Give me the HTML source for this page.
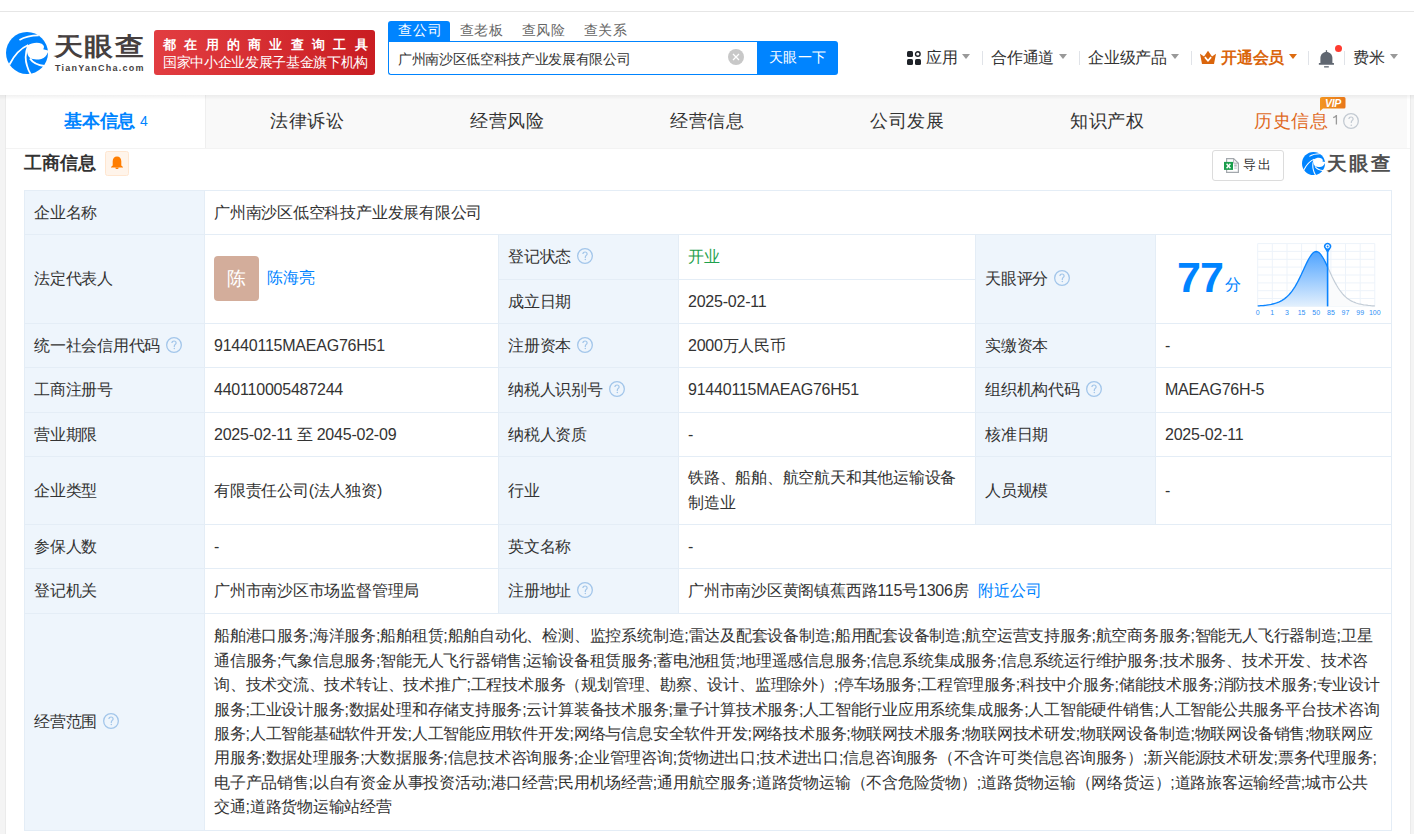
<!DOCTYPE html>
<html><head><meta charset="utf-8">
<style>
*{box-sizing:border-box;margin:0;padding:0}
html,body{width:1414px;height:834px;overflow:hidden}
body{position:relative;background:#f4f4f4;font-family:"Liberation Sans",sans-serif;color:#333;font-size:15.4px}
.a{position:absolute;white-space:nowrap}
#topbar{left:0;top:0;width:1414px;height:11px;background:#fff}
#topline{left:0;top:11px;width:1414px;height:1px;background:#e6e6e6}
#header{left:0;top:12px;width:1414px;height:83px;background:#fff}
#card{left:7px;top:95px;width:1402px;height:739px;background:#fff;box-shadow:0 0 1px rgba(0,0,0,.12)}
.tabrow{left:7px;top:95px;width:1401px;height:53px;background:#f9f9f9}
.tab{top:95px;height:53px;font-size:17.6px;color:#333;display:flex;align-items:center;justify-content:center}
.tabtxt{position:absolute;top:0;font-size:17.6px;line-height:1}
.cell{position:absolute}
.lbl{background:#eef5fc}
.hl{position:absolute;height:1px;background:#e4edf6}
.vl{position:absolute;width:1px;background:#e4edf6}
.t{position:absolute;white-space:nowrap;line-height:1;font-size:15.4px;color:#333}
.q{position:absolute;width:16px;height:16px;border:1px solid #a9cbee;border-radius:50%;color:#a9cbee;font-size:11px;line-height:14px;text-align:center}
.caret{position:absolute;width:0;height:0;border-left:4.5px solid transparent;border-right:4.5px solid transparent;border-top:5px solid #999}
.div{position:absolute;width:1px;height:14px;background:#e0e3e8}
.c{position:absolute;display:flex;align-items:center;white-space:nowrap;font-size:16px;line-height:1;color:#333;letter-spacing:-0.22px}
.qi{display:block;width:16px;height:16px;margin-left:6px;position:relative;top:-1px;flex:none}
.av{display:inline-block;width:45px;height:45px;border-radius:4px;background:#d3ad9b;color:#fff;font-size:19px;line-height:45px;text-align:center}
.para{line-height:24.4px}
</style></head><body>
<div class="a" id="topbar"></div>
<div class="a" id="topline"></div>
<div class="a" id="header"></div>

<!-- logo -->
<svg class="a" style="left:6px;top:32px" width="42" height="42" viewBox="0 0 100 100">
 <circle cx="50" cy="50" r="50" fill="#0084ff"/>
 <path d="M52,32 C60,26 75,23 85,28 C91,31 92,37 88.6,41 L100,44 L100,48 C97,55 92,62 84,64 C75,66 64,66 57.6,62 C53,58 50,52 50,45 C50,40 51,35 52,32 Z" fill="#fff"/>
 <path d="M8,78 C18,58 32,40 53,31" stroke="#fff" stroke-width="4.2" fill="none"/>
 <path d="M53,31 C46,48 45,65 50,80 C52,88 55,94 59,101" stroke="#fff" stroke-width="4.2" fill="none"/>
 <path d="M57,63 C63,72 75,79 92,81" stroke="#fff" stroke-width="4.6" fill="none"/>
 <path d="M32,19 C45,11 60,8 78,8" stroke="#fff" stroke-width="3.8" fill="none"/>
</svg>
<div class="t" style="left:54px;top:35px;font-size:27px;font-weight:bold;color:#463f3f;letter-spacing:1.2px;transform:scale(1.08,0.93);transform-origin:0 0">天眼查</div>
<div class="t" style="left:55px;top:64px;font-size:9px;font-weight:bold;color:#463f3f;letter-spacing:1.25px">TianYanCha.com</div>

<!-- red banner -->
<div class="a" style="left:154px;top:30px;width:221px;height:45px;border-radius:3px;background:linear-gradient(90deg,#e23d41,#c91d22)"></div>
<div class="t" style="left:163px;top:39px;font-size:12.5px;font-weight:bold;color:#fff;letter-spacing:8.3px">都在用的商业查询工具</div>
<div class="t" style="left:163px;top:55px;font-size:14px;font-weight:500;color:#fff;letter-spacing:-0.33px">国家中小企业发展子基金旗下机构</div>

<!-- search -->
<div class="a" style="left:388px;top:21px;width:62px;height:21px;background:#0084ff;border-radius:3px 3px 0 0"></div>
<div class="t" style="left:398px;top:23px;font-size:14px;color:#fff;letter-spacing:0.9px">查公司</div>
<div class="t" style="left:460px;top:23px;font-size:14px;letter-spacing:0.4px;color:#666">查老板</div>
<div class="t" style="left:522px;top:23px;font-size:14px;letter-spacing:0.4px;color:#666">查风险</div>
<div class="t" style="left:584px;top:23px;font-size:14px;letter-spacing:0.4px;color:#666">查关系</div>
<div class="a" style="left:388px;top:41px;width:372px;height:34px;border:1px solid #0084ff;border-right:none;border-radius:0 0 0 3px;background:#fff"></div>
<div class="t" style="left:398px;top:52px;font-size:14px;letter-spacing:-0.33px;color:#333">广州南沙区低空科技产业发展有限公司</div>
<div class="a" style="left:728px;top:49px;width:16px;height:16px;border-radius:50%;background:#c8c8c8"></div>
<svg class="a" style="left:728px;top:49px" width="16" height="16" viewBox="0 0 16 16"><path d="M5 5 L11 11 M11 5 L5 11" stroke="#fff" stroke-width="1.3"/></svg>
<div class="a" style="left:757px;top:41px;width:81px;height:34px;background:#0084ff;border-radius:0 3px 3px 0"></div>
<div class="t" style="left:769px;top:50px;font-size:14px;color:#fff;letter-spacing:0.3px">天眼一下</div>

<!-- right nav -->
<svg class="a" style="left:907px;top:51px" width="14" height="14" viewBox="0 0 14 14">
 <rect x="0" y="0" width="6" height="6" rx="1.5" fill="#1f2329"/>
 <circle cx="10.8" cy="3" r="2.3" fill="none" stroke="#1f2329" stroke-width="1.4"/>
 <rect x="0" y="8" width="6" height="6" rx="1.5" fill="#1f2329"/>
 <rect x="8" y="8" width="6" height="6" rx="1.5" fill="#1f2329"/>
</svg>
<div class="t" style="left:926px;top:50px;font-size:16px;letter-spacing:-0.25px;color:#333">应用</div>
<div class="caret" style="left:962px;top:54px"></div>
<div class="div" style="left:982px;top:51px"></div>
<div class="t" style="left:991px;top:50px;font-size:16px;letter-spacing:-0.25px;color:#333">合作通道</div>
<div class="caret" style="left:1059px;top:54px"></div>
<div class="div" style="left:1079px;top:51px"></div>
<div class="t" style="left:1088px;top:50px;font-size:16px;letter-spacing:-0.25px;color:#333">企业级产品</div>
<div class="caret" style="left:1171px;top:54px"></div>
<div class="div" style="left:1191px;top:51px"></div>
<svg class="a" style="left:1200px;top:50px" width="16" height="14" viewBox="0 0 16 13">
 <path d="M0 3.2 L4 6 L8 0.3 L12 6 L16 3.2 L14 13.5 L2 13.5 Z" fill="#da650c"/>
 <path d="M4.9 6.6 L8 10.2 L11.1 6.6" stroke="#fff" stroke-width="1.7" fill="none"/>
</svg>
<div class="t" style="left:1221px;top:50px;font-size:16px;letter-spacing:-0.25px;color:#da650c;font-weight:bold">开通会员</div>
<div class="caret" style="left:1289px;top:54px;border-top-color:#dd6b10"></div>
<div class="div" style="left:1308px;top:51px"></div>
<svg class="a" style="left:1318px;top:50px" width="17" height="18" viewBox="0 0 17 18">
 <rect x="7.8" y="0.2" width="1.3" height="2.4" fill="#5f6670"/>
 <path d="M8.4 1.9 C5 1.9 2.4 4.4 2.4 8 L2.4 13.2 L14.4 13.2 L14.4 8 C14.4 4.4 11.8 1.9 8.4 1.9 Z" fill="#5f6670"/>
 <rect x="0.8" y="13" width="15.2" height="1.7" rx="0.5" fill="#5f6670"/>
 <rect x="6.1" y="16" width="4.7" height="1.6" fill="#7d838b"/>
</svg>
<div class="a" style="left:1335px;top:45px;width:7px;height:7px;border-radius:50%;background:#ff3b30"></div>
<div class="div" style="left:1344px;top:51px"></div>
<div class="t" style="left:1353px;top:50px;font-size:16px;letter-spacing:-0.25px;color:#333">费米</div>
<div class="caret" style="left:1390px;top:54px"></div>

<!-- card -->
<div class="a" style="left:5px;top:95px;width:1px;height:739px;background:#ebebeb"></div>
<div class="a" style="left:1410px;top:95px;width:1px;height:739px;background:#ebebeb"></div>
<div class="a" style="left:6px;top:95px;width:1404px;height:739px;background:#fff"></div>
<div class="a" style="left:205px;top:95px;width:1202px;height:53px;background:#f9f9f9"></div>
<div class="a" style="left:205px;top:95px;width:1px;height:53px;background:#efefef"></div>
<div class="a" style="left:6px;top:148px;width:1404px;height:1px;background:#f3f3f3"></div>
<div class="a" style="left:0;top:95px;width:1414px;height:5px;background:linear-gradient(rgba(0,0,0,.055),rgba(0,0,0,0))"></div>
<div class="t" style="left:64px;top:112px;font-size:18px;letter-spacing:-0.2px;font-weight:bold;color:#0084ff">基本信息</div>
<div class="t" style="left:140px;top:113.5px;font-size:14px;color:#0084ff">4</div>
<div class="t" style="left:270px;top:112px;font-size:18px;letter-spacing:0.6px">法律诉讼</div>
<div class="t" style="left:470px;top:112px;font-size:18px;letter-spacing:0.6px">经营风险</div>
<div class="t" style="left:670px;top:112px;font-size:18px;letter-spacing:0.6px">经营信息</div>
<div class="t" style="left:870px;top:112px;font-size:18px;letter-spacing:0.6px">公司发展</div>
<div class="t" style="left:1070px;top:112px;font-size:18px;letter-spacing:0.6px">知识产权</div>
<div class="t" style="left:1254px;top:112px;font-size:18px;letter-spacing:0.6px;color:#e06a1f">历史信息</div>
<svg class="a" style="left:1332px;top:114px" width="7" height="12" viewBox="0 0 7 12"><path d="M4.4 1 V10.6 M4.4 1.2 C3.8 2.4 2.6 3.2 1.2 3.7" fill="none" stroke="#999" stroke-width="1.3"/></svg>
<svg class="a" style="left:1343px;top:113px" width="16" height="16" viewBox="0 0 16 16"><circle cx="8" cy="8" r="7.35" fill="none" stroke="#c3cad2" stroke-width="1.3"/><path d="M5.9 6.1 C5.9 4.7 6.9 4 8 4 C9.2 4 10.1 4.8 10.1 5.9 C10.1 7.3 8.3 7.6 8.3 9.2 L8.3 10.1" fill="none" stroke="#c3cad2" stroke-width="1.2"/><circle cx="8.3" cy="12.2" r="0.8" fill="#c3cad2"/></svg>
<svg class="a" style="left:1320px;top:97px" width="26" height="14" viewBox="0 0 26 14">
 <defs><linearGradient id="vg" x1="0" x2="1"><stop offset="0" stop-color="#f3951f"/><stop offset="1" stop-color="#e8771a"/></linearGradient></defs>
 <path d="M2 0 H24 Q25.5 0 25.5 1.5 V10 Q25.5 11.5 24 11.5 H3 L0 14 V1.5 Q0 0 2 0 Z" fill="url(#vg)"/>
 <text x="13" y="9.6" font-family="Liberation Sans" font-size="10.5" font-weight="bold" font-style="italic" letter-spacing="-0.3" fill="#fff" text-anchor="middle">VIP</text>
</svg>

<!-- section header -->
<div class="t" style="left:24px;top:154px;font-size:18px;letter-spacing:0px;font-weight:bold;color:#333">工商信息</div>
<div class="a" style="left:105px;top:151px;width:24px;height:25px;background:#fff4ea;border:1px solid #ffe6d0;border-radius:2.5px"></div>
<svg class="a" style="left:111px;top:156px" width="12" height="13" viewBox="0 0 12 13">
 <path d="M6 0.4 C8.6 0.4 10.2 2.4 10.3 5.2 L10.3 9.6 L12 10.9 L12 11.6 L0 11.6 L0 10.9 L1.7 9.6 L1.7 5.2 C1.8 2.4 3.4 0.4 6 0.4 Z" fill="#ff7d00"/>
 <path d="M4.3 11.4 C4.4 12.4 5.1 13 6 13 C6.9 13 7.6 12.4 7.7 11.4 Z" fill="#ff7d00"/>
</svg>
<div class="a" style="left:1212px;top:150px;width:72px;height:31px;border:1px solid #dcdcdc;border-radius:3px;background:#fff"></div>
<svg class="a" style="left:1224px;top:158px" width="16" height="15" viewBox="0 0 16 15">
 <path d="M2.6 0.6 H9.6 L14.4 5.2 V14.4 H2.6 Z" fill="#fff" stroke="#a3a8ad" stroke-width="1.2"/>
 <path d="M9.6 0.6 V5.2 H14.4" fill="none" stroke="#a3a8ad" stroke-width="0.9"/>
 <rect x="10.2" y="6.4" width="2.6" height="2.2" fill="#b9bdc1"/><rect x="10.2" y="9.6" width="2.6" height="1" fill="#b9bdc1"/>
 <rect x="0" y="3.9" width="9" height="8" fill="#1a9d4c"/>
 <path d="M2.6 5.7 L6.4 10.2 M6.4 5.7 L2.6 10.2" stroke="#fff" stroke-width="1.4"/>
</svg>
<div class="t" style="left:1243px;top:158px;font-size:13px;letter-spacing:2px;color:#333">导出</div>
<svg class="a" style="left:1302px;top:152px" width="23" height="23" viewBox="0 0 100 100">
 <circle cx="50" cy="50" r="50" fill="#0084ff"/>
 <path d="M52,32 C60,26 75,23 85,28 C91,31 92,37 88.6,41 L100,44 L100,48 C97,55 92,62 84,64 C75,66 64,66 57.6,62 C53,58 50,52 50,45 C50,40 51,35 52,32 Z" fill="#fff"/>
 <path d="M8,78 C18,58 32,40 53,31" stroke="#fff" stroke-width="4.6" fill="none"/>
 <path d="M53,31 C46,48 45,65 50,80 C52,88 55,94 59,101" stroke="#fff" stroke-width="4.6" fill="none"/>
 <path d="M57,63 C63,72 75,79 92,81" stroke="#fff" stroke-width="4.6" fill="none"/>
 <path d="M32,19 C45,11 60,8 78,8" stroke="#fff" stroke-width="4.6" fill="none"/>
</svg>
<div class="t" style="left:1327px;top:154px;font-size:20px;font-weight:bold;color:#505050;letter-spacing:2px;transform:scale(1.0,0.97);transform-origin:0 0">天眼查</div>

<!-- TABLE -->
<!--TBL-->
<div class="a" style="left:24px;top:190px;width:1368px;height:641px;background:#fff"></div>
<div class="a" style="left:24px;top:190px;width:180px;height:640px;background:#eef5fc"></div>
<div class="a" style="left:498px;top:234px;width:180px;height:379px;background:#eef5fc"></div>
<div class="a" style="left:975px;top:234px;width:180px;height:290px;background:#eef5fc"></div>
<div class="hl" style="left:24px;top:190px;width:1368px"></div>
<div class="hl" style="left:24px;top:234px;width:1368px"></div>
<div class="hl" style="left:24px;top:323px;width:1368px"></div>
<div class="hl" style="left:24px;top:367px;width:1368px"></div>
<div class="hl" style="left:24px;top:412px;width:1368px"></div>
<div class="hl" style="left:24px;top:456px;width:1368px"></div>
<div class="hl" style="left:24px;top:524px;width:1368px"></div>
<div class="hl" style="left:24px;top:568px;width:1368px"></div>
<div class="hl" style="left:24px;top:613px;width:1368px"></div>
<div class="hl" style="left:24px;top:830px;width:1368px"></div>
<div class="hl" style="left:498px;top:279px;width:478px"></div>
<div class="vl" style="left:24px;top:190px;height:641px"></div>
<div class="vl" style="left:1391px;top:190px;height:641px"></div>
<div class="vl" style="left:204px;top:190px;height:641px"></div>
<div class="vl" style="left:498px;top:234px;height:380px"></div>
<div class="vl" style="left:678px;top:234px;height:380px"></div>
<div class="vl" style="left:975px;top:234px;height:291px"></div>
<div class="vl" style="left:1155px;top:234px;height:291px"></div>
<div class="c" style="left:25px;top:191px;width:179px;height:43px;padding-left:9px;">企业名称</div>
<div class="c" style="left:205px;top:191px;width:1186px;height:43px;padding-left:9px;">广州南沙区低空科技产业发展有限公司</div>
<div class="c" style="left:25px;top:235px;width:179px;height:88px;padding-left:9px;">法定代表人</div>
<div class="c" style="left:205px;top:235px;width:293px;height:88px;padding-left:9px;padding-bottom:2px"><span class="av">陈</span><span style="color:#0084ff;margin-left:8px">陈海亮</span></div>
<div class="c" style="left:499px;top:235px;width:179px;height:44px;padding-left:9px;">登记状态<svg class="qi" width="16" height="16" viewBox="0 0 16 16"><circle cx="8" cy="8" r="7.35" fill="none" stroke="#a3c6ea" stroke-width="1.3"/><path d="M5.9 6.1 C5.9 4.7 6.9 4 8 4 C9.2 4 10.1 4.8 10.1 5.9 C10.1 7.3 8.3 7.6 8.3 9.2 L8.3 10.1" fill="none" stroke="#a3c6ea" stroke-width="1.2"/><circle cx="8.3" cy="11.6" r="0.75" fill="#a3c6ea"/></svg></div>
<div class="c" style="left:679px;top:235px;width:296px;height:44px;padding-left:9px;"><span style="color:#1fa14d">开业</span></div>
<div class="c" style="left:499px;top:280px;width:179px;height:43px;padding-left:9px;">成立日期</div>
<div class="c" style="left:679px;top:280px;width:296px;height:43px;padding-left:9px;">2025-02-11</div>
<div class="c" style="left:976px;top:235px;width:179px;height:88px;padding-left:9px;">天眼评分<svg class="qi" width="16" height="16" viewBox="0 0 16 16"><circle cx="8" cy="8" r="7.35" fill="none" stroke="#a3c6ea" stroke-width="1.3"/><path d="M5.9 6.1 C5.9 4.7 6.9 4 8 4 C9.2 4 10.1 4.8 10.1 5.9 C10.1 7.3 8.3 7.6 8.3 9.2 L8.3 10.1" fill="none" stroke="#a3c6ea" stroke-width="1.2"/><circle cx="8.3" cy="11.6" r="0.75" fill="#a3c6ea"/></svg></div>
<div class="c" style="left:25px;top:324px;width:179px;height:43px;padding-left:9px;">统一社会信用代码<svg class="qi" width="16" height="16" viewBox="0 0 16 16"><circle cx="8" cy="8" r="7.35" fill="none" stroke="#a3c6ea" stroke-width="1.3"/><path d="M5.9 6.1 C5.9 4.7 6.9 4 8 4 C9.2 4 10.1 4.8 10.1 5.9 C10.1 7.3 8.3 7.6 8.3 9.2 L8.3 10.1" fill="none" stroke="#a3c6ea" stroke-width="1.2"/><circle cx="8.3" cy="11.6" r="0.75" fill="#a3c6ea"/></svg></div>
<div class="c" style="left:205px;top:324px;width:293px;height:43px;padding-left:9px;">91440115MAEAG76H51</div>
<div class="c" style="left:499px;top:324px;width:179px;height:43px;padding-left:9px;">注册资本<svg class="qi" width="16" height="16" viewBox="0 0 16 16"><circle cx="8" cy="8" r="7.35" fill="none" stroke="#a3c6ea" stroke-width="1.3"/><path d="M5.9 6.1 C5.9 4.7 6.9 4 8 4 C9.2 4 10.1 4.8 10.1 5.9 C10.1 7.3 8.3 7.6 8.3 9.2 L8.3 10.1" fill="none" stroke="#a3c6ea" stroke-width="1.2"/><circle cx="8.3" cy="11.6" r="0.75" fill="#a3c6ea"/></svg></div>
<div class="c" style="left:679px;top:324px;width:296px;height:43px;padding-left:9px;">2000万人民币</div>
<div class="c" style="left:976px;top:324px;width:179px;height:43px;padding-left:9px;">实缴资本</div>
<div class="c" style="left:1156px;top:324px;width:235px;height:43px;padding-left:9px;">-</div>
<div class="c" style="left:25px;top:368px;width:179px;height:44px;padding-left:9px;">工商注册号</div>
<div class="c" style="left:205px;top:368px;width:293px;height:44px;padding-left:9px;">440110005487244</div>
<div class="c" style="left:499px;top:368px;width:179px;height:44px;padding-left:9px;">纳税人识别号<svg class="qi" width="16" height="16" viewBox="0 0 16 16"><circle cx="8" cy="8" r="7.35" fill="none" stroke="#a3c6ea" stroke-width="1.3"/><path d="M5.9 6.1 C5.9 4.7 6.9 4 8 4 C9.2 4 10.1 4.8 10.1 5.9 C10.1 7.3 8.3 7.6 8.3 9.2 L8.3 10.1" fill="none" stroke="#a3c6ea" stroke-width="1.2"/><circle cx="8.3" cy="11.6" r="0.75" fill="#a3c6ea"/></svg></div>
<div class="c" style="left:679px;top:368px;width:296px;height:44px;padding-left:9px;">91440115MAEAG76H51</div>
<div class="c" style="left:976px;top:368px;width:179px;height:44px;padding-left:9px;">组织机构代码<svg class="qi" width="16" height="16" viewBox="0 0 16 16"><circle cx="8" cy="8" r="7.35" fill="none" stroke="#a3c6ea" stroke-width="1.3"/><path d="M5.9 6.1 C5.9 4.7 6.9 4 8 4 C9.2 4 10.1 4.8 10.1 5.9 C10.1 7.3 8.3 7.6 8.3 9.2 L8.3 10.1" fill="none" stroke="#a3c6ea" stroke-width="1.2"/><circle cx="8.3" cy="11.6" r="0.75" fill="#a3c6ea"/></svg></div>
<div class="c" style="left:1156px;top:368px;width:235px;height:44px;padding-left:9px;">MAEAG76H-5</div>
<div class="c" style="left:25px;top:413px;width:179px;height:43px;padding-left:9px;">营业期限</div>
<div class="c" style="left:205px;top:413px;width:293px;height:43px;padding-left:9px;">2025-02-11 至 2045-02-09</div>
<div class="c" style="left:499px;top:413px;width:179px;height:43px;padding-left:9px;">纳税人资质</div>
<div class="c" style="left:679px;top:413px;width:296px;height:43px;padding-left:9px;">-</div>
<div class="c" style="left:976px;top:413px;width:179px;height:43px;padding-left:9px;">核准日期</div>
<div class="c" style="left:1156px;top:413px;width:235px;height:43px;padding-left:9px;">2025-02-11</div>
<div class="c" style="left:25px;top:457px;width:179px;height:67px;padding-left:9px;">企业类型</div>
<div class="c" style="left:205px;top:457px;width:293px;height:67px;padding-left:9px;">有限责任公司(法人独资)</div>
<div class="c" style="left:499px;top:457px;width:179px;height:67px;padding-left:9px;">行业</div>
<div class="c" style="left:679px;top:457px;width:296px;height:67px;padding-left:9px;"><div style="line-height:24.4px">铁路、船舶、航空航天和其他运输设备<br>制造业</div></div>
<div class="c" style="left:976px;top:457px;width:179px;height:67px;padding-left:9px;">人员规模</div>
<div class="c" style="left:1156px;top:457px;width:235px;height:67px;padding-left:9px;">-</div>
<div class="c" style="left:25px;top:525px;width:179px;height:43px;padding-left:9px;">参保人数</div>
<div class="c" style="left:205px;top:525px;width:293px;height:43px;padding-left:9px;">-</div>
<div class="c" style="left:499px;top:525px;width:179px;height:43px;padding-left:9px;">英文名称</div>
<div class="c" style="left:679px;top:525px;width:712px;height:43px;padding-left:9px;">-</div>
<div class="c" style="left:25px;top:569px;width:179px;height:44px;padding-left:9px;">登记机关</div>
<div class="c" style="left:205px;top:569px;width:293px;height:44px;padding-left:9px;">广州市南沙区市场监督管理局</div>
<div class="c" style="left:499px;top:569px;width:179px;height:44px;padding-left:9px;">注册地址<svg class="qi" width="16" height="16" viewBox="0 0 16 16"><circle cx="8" cy="8" r="7.35" fill="none" stroke="#a3c6ea" stroke-width="1.3"/><path d="M5.9 6.1 C5.9 4.7 6.9 4 8 4 C9.2 4 10.1 4.8 10.1 5.9 C10.1 7.3 8.3 7.6 8.3 9.2 L8.3 10.1" fill="none" stroke="#a3c6ea" stroke-width="1.2"/><circle cx="8.3" cy="11.6" r="0.75" fill="#a3c6ea"/></svg></div>
<div class="c" style="left:679px;top:569px;width:712px;height:44px;padding-left:9px;">广州市南沙区黄阁镇蕉西路115号1306房<span style="color:#0084ff;margin-left:10px">附近公司</span></div>
<div class="c" style="left:25px;top:614px;width:179px;height:216px;padding-left:9px;">经营范围<svg class="qi" width="16" height="16" viewBox="0 0 16 16"><circle cx="8" cy="8" r="7.35" fill="none" stroke="#a3c6ea" stroke-width="1.3"/><path d="M5.9 6.1 C5.9 4.7 6.9 4 8 4 C9.2 4 10.1 4.8 10.1 5.9 C10.1 7.3 8.3 7.6 8.3 9.2 L8.3 10.1" fill="none" stroke="#a3c6ea" stroke-width="1.2"/><circle cx="8.3" cy="11.6" r="0.75" fill="#a3c6ea"/></svg></div>
<div class="c" style="left:205px;top:614px;width:1186px;height:216px;padding-left:9px;"><div class="para"><div class="pl">船舶港口服务;海洋服务;船舶租赁;船舶自动化、检测、监控系统制造;雷达及配套设备制造;船用配套设备制造;航空运营支持服务;航空商务服务;智能无人飞行器制造;卫星</div><div class="pl">通信服务;气象信息服务;智能无人飞行器销售;运输设备租赁服务;蓄电池租赁;地理遥感信息服务;信息系统集成服务;信息系统运行维护服务;技术服务、技术开发、技术咨</div><div class="pl">询、技术交流、技术转让、技术推广;工程技术服务（规划管理、勘察、设计、监理除外）;停车场服务;工程管理服务;科技中介服务;储能技术服务;消防技术服务;专业设计</div><div class="pl">服务;工业设计服务;数据处理和存储支持服务;云计算装备技术服务;量子计算技术服务;人工智能行业应用系统集成服务;人工智能硬件销售;人工智能公共服务平台技术咨询</div><div class="pl">服务;人工智能基础软件开发;人工智能应用软件开发;网络与信息安全软件开发;网络技术服务;物联网技术服务;物联网技术研发;物联网设备制造;物联网设备销售;物联网应</div><div class="pl">用服务;数据处理服务;大数据服务;信息技术咨询服务;企业管理咨询;货物进出口;技术进出口;信息咨询服务（不含许可类信息咨询服务）;新兴能源技术研发;票务代理服务;</div><div class="pl">电子产品销售;以自有资金从事投资活动;港口经营;民用机场经营;通用航空服务;道路货物运输（不含危险货物）;道路货物运输（网络货运）;道路旅客运输经营;城市公共</div><div class="pl">交通;道路货物运输站经营</div></div></div>
<!--/TBL-->
<!--CHART-->
<svg class="a" style="left:1250px;top:238px" width="135" height="80" viewBox="0 0 135 80">
<defs><linearGradient id="cg" x1="0" y1="0" x2="0" y2="1"><stop offset="0" stop-color="#4ea3ff"/><stop offset="1" stop-color="#e3f0fd"/></linearGradient></defs>
<g stroke="#edf3fa" stroke-width="1"><line x1="7.7" y1="5.6" x2="7.7" y2="68.4"/><line x1="22.3" y1="5.6" x2="22.3" y2="68.4"/><line x1="37.0" y1="5.6" x2="37.0" y2="68.4"/><line x1="51.6" y1="5.6" x2="51.6" y2="68.4"/><line x1="66.2" y1="5.6" x2="66.2" y2="68.4"/><line x1="80.9" y1="5.6" x2="80.9" y2="68.4"/><line x1="95.5" y1="5.6" x2="95.5" y2="68.4"/><line x1="110.2" y1="5.6" x2="110.2" y2="68.4"/><line x1="124.8" y1="5.6" x2="124.8" y2="68.4"/><line x1="7.7" y1="5.6" x2="124.8" y2="5.6"/><line x1="7.7" y1="13.4" x2="124.8" y2="13.4"/><line x1="7.7" y1="21.3" x2="124.8" y2="21.3"/><line x1="7.7" y1="29.1" x2="124.8" y2="29.1"/><line x1="7.7" y1="37.0" x2="124.8" y2="37.0"/><line x1="7.7" y1="44.9" x2="124.8" y2="44.9"/><line x1="7.7" y1="52.7" x2="124.8" y2="52.7"/><line x1="7.7" y1="60.5" x2="124.8" y2="60.5"/><line x1="7.7" y1="68.4" x2="124.8" y2="68.4"/></g>
<path d="M77.6,28.9 79.1,32.2 80.6,35.5 82.1,38.7 83.6,41.7 85.1,44.6 86.6,47.3 88.1,49.8 89.6,52.0 91.1,54.0 92.6,55.8 94.1,57.5 95.6,58.9 97.1,60.2 98.6,61.3 100.1,62.2 101.6,63.1 103.1,63.8 104.6,64.4 106.1,65.0 107.6,65.5 109.1,65.9 110.6,66.2 112.1,66.5 113.6,66.8 115.1,67.0 116.6,67.2 118.1,67.4 119.6,67.5 121.1,67.7 122.6,67.8 124.1,67.9 124.8,67.9 L124.8,68.4 L77.6,68.4 Z" fill="#fafbfc"/>
<path d="M7.7,67.9 9.2,67.8 10.7,67.7 12.2,67.6 13.7,67.5 15.2,67.3 16.7,67.1 18.2,66.9 19.7,66.7 21.2,66.4 22.7,66.0 24.2,65.6 25.7,65.2 27.2,64.7 28.7,64.1 30.2,63.4 31.7,62.6 33.2,61.7 34.7,60.6 36.2,59.4 37.7,58.1 39.2,56.5 40.7,54.8 42.2,52.8 43.7,50.7 45.2,48.3 46.7,45.7 48.2,42.9 49.7,39.9 51.2,36.8 52.7,33.5 54.2,30.2 55.7,27.0 57.2,23.9 58.7,21.0 60.2,18.5 61.7,16.4 63.2,14.8 64.7,13.8 66.2,13.5 67.7,13.8 69.2,14.8 70.7,16.4 72.2,18.5 73.7,21.0 75.2,23.9 76.7,27.0 77.6,28.9 L77.6,68.4 L7.7,68.4 Z" fill="url(#cg)"/>
<polyline points="77.6,28.9 79.1,32.2 80.6,35.5 82.1,38.7 83.6,41.7 85.1,44.6 86.6,47.3 88.1,49.8 89.6,52.0 91.1,54.0 92.6,55.8 94.1,57.5 95.6,58.9 97.1,60.2 98.6,61.3 100.1,62.2 101.6,63.1 103.1,63.8 104.6,64.4 106.1,65.0 107.6,65.5 109.1,65.9 110.6,66.2 112.1,66.5 113.6,66.8 115.1,67.0 116.6,67.2 118.1,67.4 119.6,67.5 121.1,67.7 122.6,67.8 124.1,67.9 124.8,67.9" fill="none" stroke="#c3cdd7" stroke-width="1.2"/>
<polyline points="7.7,67.9 9.2,67.8 10.7,67.7 12.2,67.6 13.7,67.5 15.2,67.3 16.7,67.1 18.2,66.9 19.7,66.7 21.2,66.4 22.7,66.0 24.2,65.6 25.7,65.2 27.2,64.7 28.7,64.1 30.2,63.4 31.7,62.6 33.2,61.7 34.7,60.6 36.2,59.4 37.7,58.1 39.2,56.5 40.7,54.8 42.2,52.8 43.7,50.7 45.2,48.3 46.7,45.7 48.2,42.9 49.7,39.9 51.2,36.8 52.7,33.5 54.2,30.2 55.7,27.0 57.2,23.9 58.7,21.0 60.2,18.5 61.7,16.4 63.2,14.8 64.7,13.8 66.2,13.5 67.7,13.8 69.2,14.8 70.7,16.4 72.2,18.5 73.7,21.0 75.2,23.9 76.7,27.0 77.6,28.9" fill="none" stroke="#0a84ff" stroke-width="1.35"/>
<line x1="77.6" y1="9.1" x2="77.6" y2="68.4" stroke="#0a84ff" stroke-width="1.6"/>
<path d="M77.6,15.1 L74.7,10.6 A3.6 3.6 0 1 1 80.5,10.6 Z" fill="#0a84ff"/>
<circle cx="77.6" cy="8.4" r="2.1" fill="#fff"/><circle cx="77.6" cy="8.4" r="1" fill="#0a84ff"/>
<g font-family="Liberation Sans" font-size="7" fill="#2f8ff5" text-anchor="middle"><text x="7.7" y="76.6">0</text><text x="22.3" y="76.6">1</text><text x="37.0" y="76.6">3</text><text x="51.6" y="76.6">15</text><text x="66.2" y="76.6">50</text><text x="80.9" y="76.6">85</text><text x="95.5" y="76.6">97</text><text x="110.2" y="76.6">99</text><text x="124.8" y="76.6">100</text></g>
</svg>
<div class="t" style="left:1177px;top:256px;font-size:43px;font-weight:bold;color:#0084ff;letter-spacing:-0.8px">77</div>
<div class="t" style="left:1225px;top:277px;font-size:16px;color:#0084ff">分</div>
<!--/CHART-->
</body></html>
